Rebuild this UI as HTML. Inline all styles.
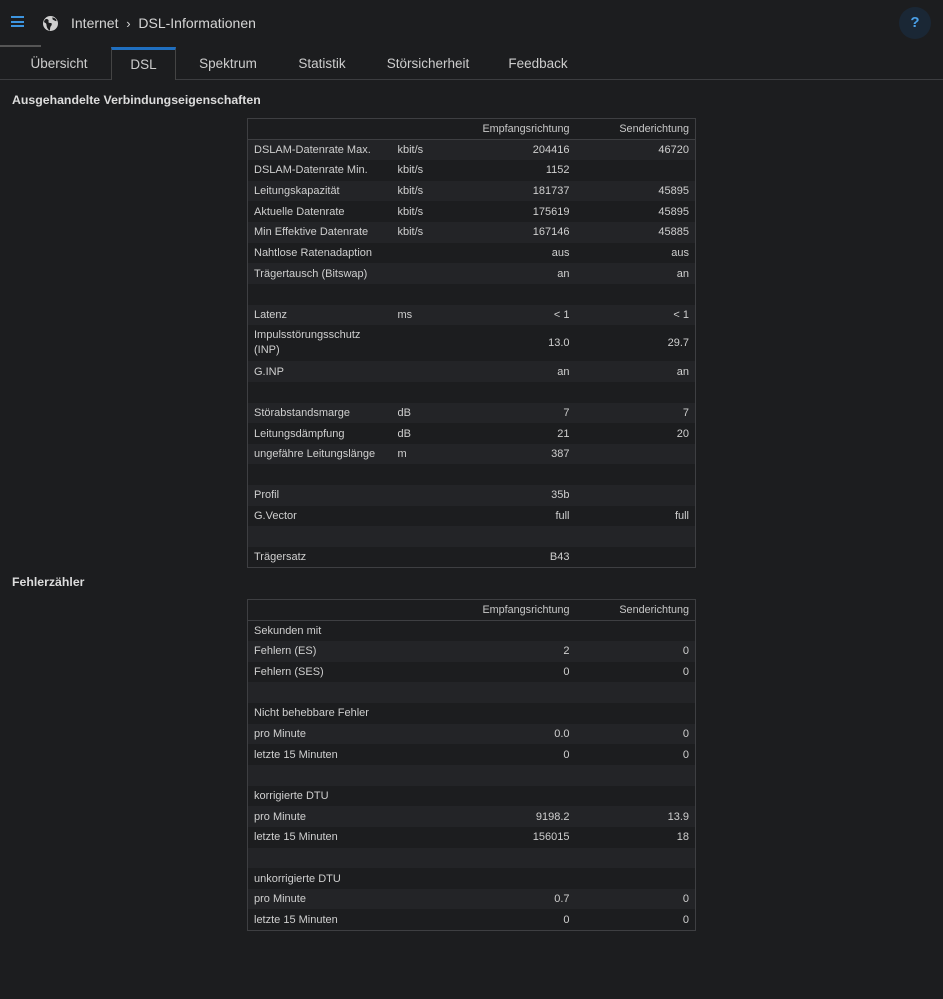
<!DOCTYPE html>
<html><head><meta charset="utf-8"><style>
*{box-sizing:border-box;margin:0;padding:0}
body{width:943px;height:999px;background:#1c1d1f;color:#cfcfcf;font-family:"Liberation Sans",sans-serif;font-size:11px;position:relative;overflow:hidden}
.top{position:absolute;left:0;top:0;width:943px;height:46px}
.ham{position:absolute;left:11px;top:16px;width:13px}
.ham i{display:block;height:2px;background:#3d95e0;margin-bottom:2.5px}
.globe{position:absolute;left:42px;top:15px}
.crumb{position:absolute;left:71px;top:15px;font-size:14px;color:#d5d5d5}
.help{position:absolute;left:899px;top:7px;width:32px;height:32px;border-radius:50%;background:#1a2735;color:#4aa0e8;font-weight:bold;font-size:15px;text-align:center;line-height:32px}
.lline{position:absolute;left:0;top:45px;width:41px;height:2px;background:#555}
.tabs{position:absolute;left:0;top:47px;width:943px;height:33px;border-bottom:1px solid #3c3d40}
.tab{position:absolute;top:1px;height:32px;text-align:center;line-height:32px;font-size:13.5px;color:#cdcdcd}
.tab.act{top:0;height:33px;border:1px solid #444;border-top:3px solid #1f6fc0;border-bottom:none;background:#1c1d1f;line-height:30px}
h2{position:absolute;left:12px;font-size:12.3px;font-weight:bold;color:#dcdcdc}
table{position:absolute;left:247px;width:449px;border-collapse:collapse;border:1px solid #3e3f42}
td,th{padding:0 6px;height:20.65px;font-weight:normal;white-space:nowrap}
th{height:21px;border-bottom:1px solid #3e3f42;text-align:right;font-size:10.8px;color:#c8c8c8}
tr.l td{background:#232427}
td.n{text-align:right}
td.c1{width:144px}
td.c2{width:60px}
td.c3{width:124px}
</style></head><body>
<div class="top">
<div class="ham"><i></i><i></i><i></i></div>
<svg class="globe" width="17" height="17" viewBox="0 0 17 17"><circle cx="8.5" cy="8.5" r="7.5" fill="#cfcfcf"/><path d="M4 4c2 0 3 1 2.5 2.5S8 8 9 8s1 2 0 3-1 3-1 4.5C6 15 4.5 12 4.5 10S3 8 2 7C2.5 5 3 4.5 4 4zM10 2.5c1 1 0 2 1.5 2.5s2 1.5 3 1c0-2-2-3.5-4.5-3.5z" fill="#1c1d1f"/></svg>
<div class="crumb">Internet &nbsp;<span style="font-size:13px">›</span>&nbsp; DSL-Informationen</div>
<div class="help">?</div>
</div>
<div class="lline"></div>
<div class="tabs">
<div class="tab" style="left:10px;width:98px">Übersicht</div>
<div class="tab act" style="left:111px;width:65px">DSL</div>
<div class="tab" style="left:180px;width:96px">Spektrum</div>
<div class="tab" style="left:276px;width:92px">Statistik</div>
<div class="tab" style="left:368px;width:120px">Störsicherheit</div>
<div class="tab" style="left:488px;width:100px">Feedback</div>
</div>
<h2 style="top:93px">Ausgehandelte Verbindungseigenschaften</h2>
<table style="top:118px">
<tr><th></th><th></th><th>Empfangsrichtung</th><th>Senderichtung</th></tr>
<tr class="l"><td class="c1">DSLAM-Datenrate Max.</td><td class="c2">kbit/s</td><td class="n c3">204416</td><td class="n">46720</td></tr>
<tr><td>DSLAM-Datenrate Min.</td><td>kbit/s</td><td class="n">1152</td><td class="n"></td></tr>
<tr class="l"><td>Leitungskapazität</td><td>kbit/s</td><td class="n">181737</td><td class="n">45895</td></tr>
<tr><td>Aktuelle Datenrate</td><td>kbit/s</td><td class="n">175619</td><td class="n">45895</td></tr>
<tr class="l"><td>Min Effektive Datenrate</td><td>kbit/s</td><td class="n">167146</td><td class="n">45885</td></tr>
<tr><td>Nahtlose Ratenadaption</td><td></td><td class="n">aus</td><td class="n">aus</td></tr>
<tr class="l"><td>Trägertausch (Bitswap)</td><td></td><td class="n">an</td><td class="n">an</td></tr>
<tr><td></td><td></td><td></td><td></td></tr>
<tr class="l"><td>Latenz</td><td>ms</td><td class="n">&lt; 1</td><td class="n">&lt; 1</td></tr>
<tr><td style="height:36px;line-height:15px">Impulsstörungsschutz<br>(INP)</td><td></td><td class="n">13.0</td><td class="n">29.7</td></tr>
<tr class="l"><td>G.INP</td><td></td><td class="n">an</td><td class="n">an</td></tr>
<tr><td></td><td></td><td></td><td></td></tr>
<tr class="l"><td>Störabstandsmarge</td><td>dB</td><td class="n">7</td><td class="n">7</td></tr>
<tr><td>Leitungsdämpfung</td><td>dB</td><td class="n">21</td><td class="n">20</td></tr>
<tr class="l"><td>ungefähre Leitungslänge</td><td>m</td><td class="n">387</td><td class="n"></td></tr>
<tr><td></td><td></td><td></td><td></td></tr>
<tr class="l"><td>Profil</td><td></td><td class="n">35b</td><td class="n"></td></tr>
<tr><td>G.Vector</td><td></td><td class="n">full</td><td class="n">full</td></tr>
<tr class="l"><td></td><td></td><td></td><td></td></tr>
<tr><td>Trägersatz</td><td></td><td class="n">B43</td><td class="n"></td></tr>
</table>
<h2 style="top:575px">Fehlerzähler</h2>
<table style="top:599px">
<tr><th></th><th></th><th>Empfangsrichtung</th><th>Senderichtung</th></tr>
<tr><td class="c1">Sekunden mit</td><td class="c2"></td><td class="n c3"></td><td class="n"></td></tr>
<tr class="l"><td>Fehlern (ES)</td><td></td><td class="n">2</td><td class="n">0</td></tr>
<tr><td>Fehlern (SES)</td><td></td><td class="n">0</td><td class="n">0</td></tr>
<tr class="l"><td></td><td></td><td></td><td></td></tr>
<tr><td>Nicht behebbare Fehler</td><td></td><td></td><td></td></tr>
<tr class="l"><td>pro Minute</td><td></td><td class="n">0.0</td><td class="n">0</td></tr>
<tr><td>letzte 15 Minuten</td><td></td><td class="n">0</td><td class="n">0</td></tr>
<tr class="l"><td></td><td></td><td></td><td></td></tr>
<tr><td>korrigierte DTU</td><td></td><td></td><td></td></tr>
<tr class="l"><td>pro Minute</td><td></td><td class="n">9198.2</td><td class="n">13.9</td></tr>
<tr><td>letzte 15 Minuten</td><td></td><td class="n">156015</td><td class="n">18</td></tr>
<tr class="l"><td></td><td></td><td></td><td></td></tr>
<tr><td>unkorrigierte DTU</td><td></td><td></td><td></td></tr>
<tr class="l"><td>pro Minute</td><td></td><td class="n">0.7</td><td class="n">0</td></tr>
<tr><td>letzte 15 Minuten</td><td></td><td class="n">0</td><td class="n">0</td></tr>
</table>
</body></html>
